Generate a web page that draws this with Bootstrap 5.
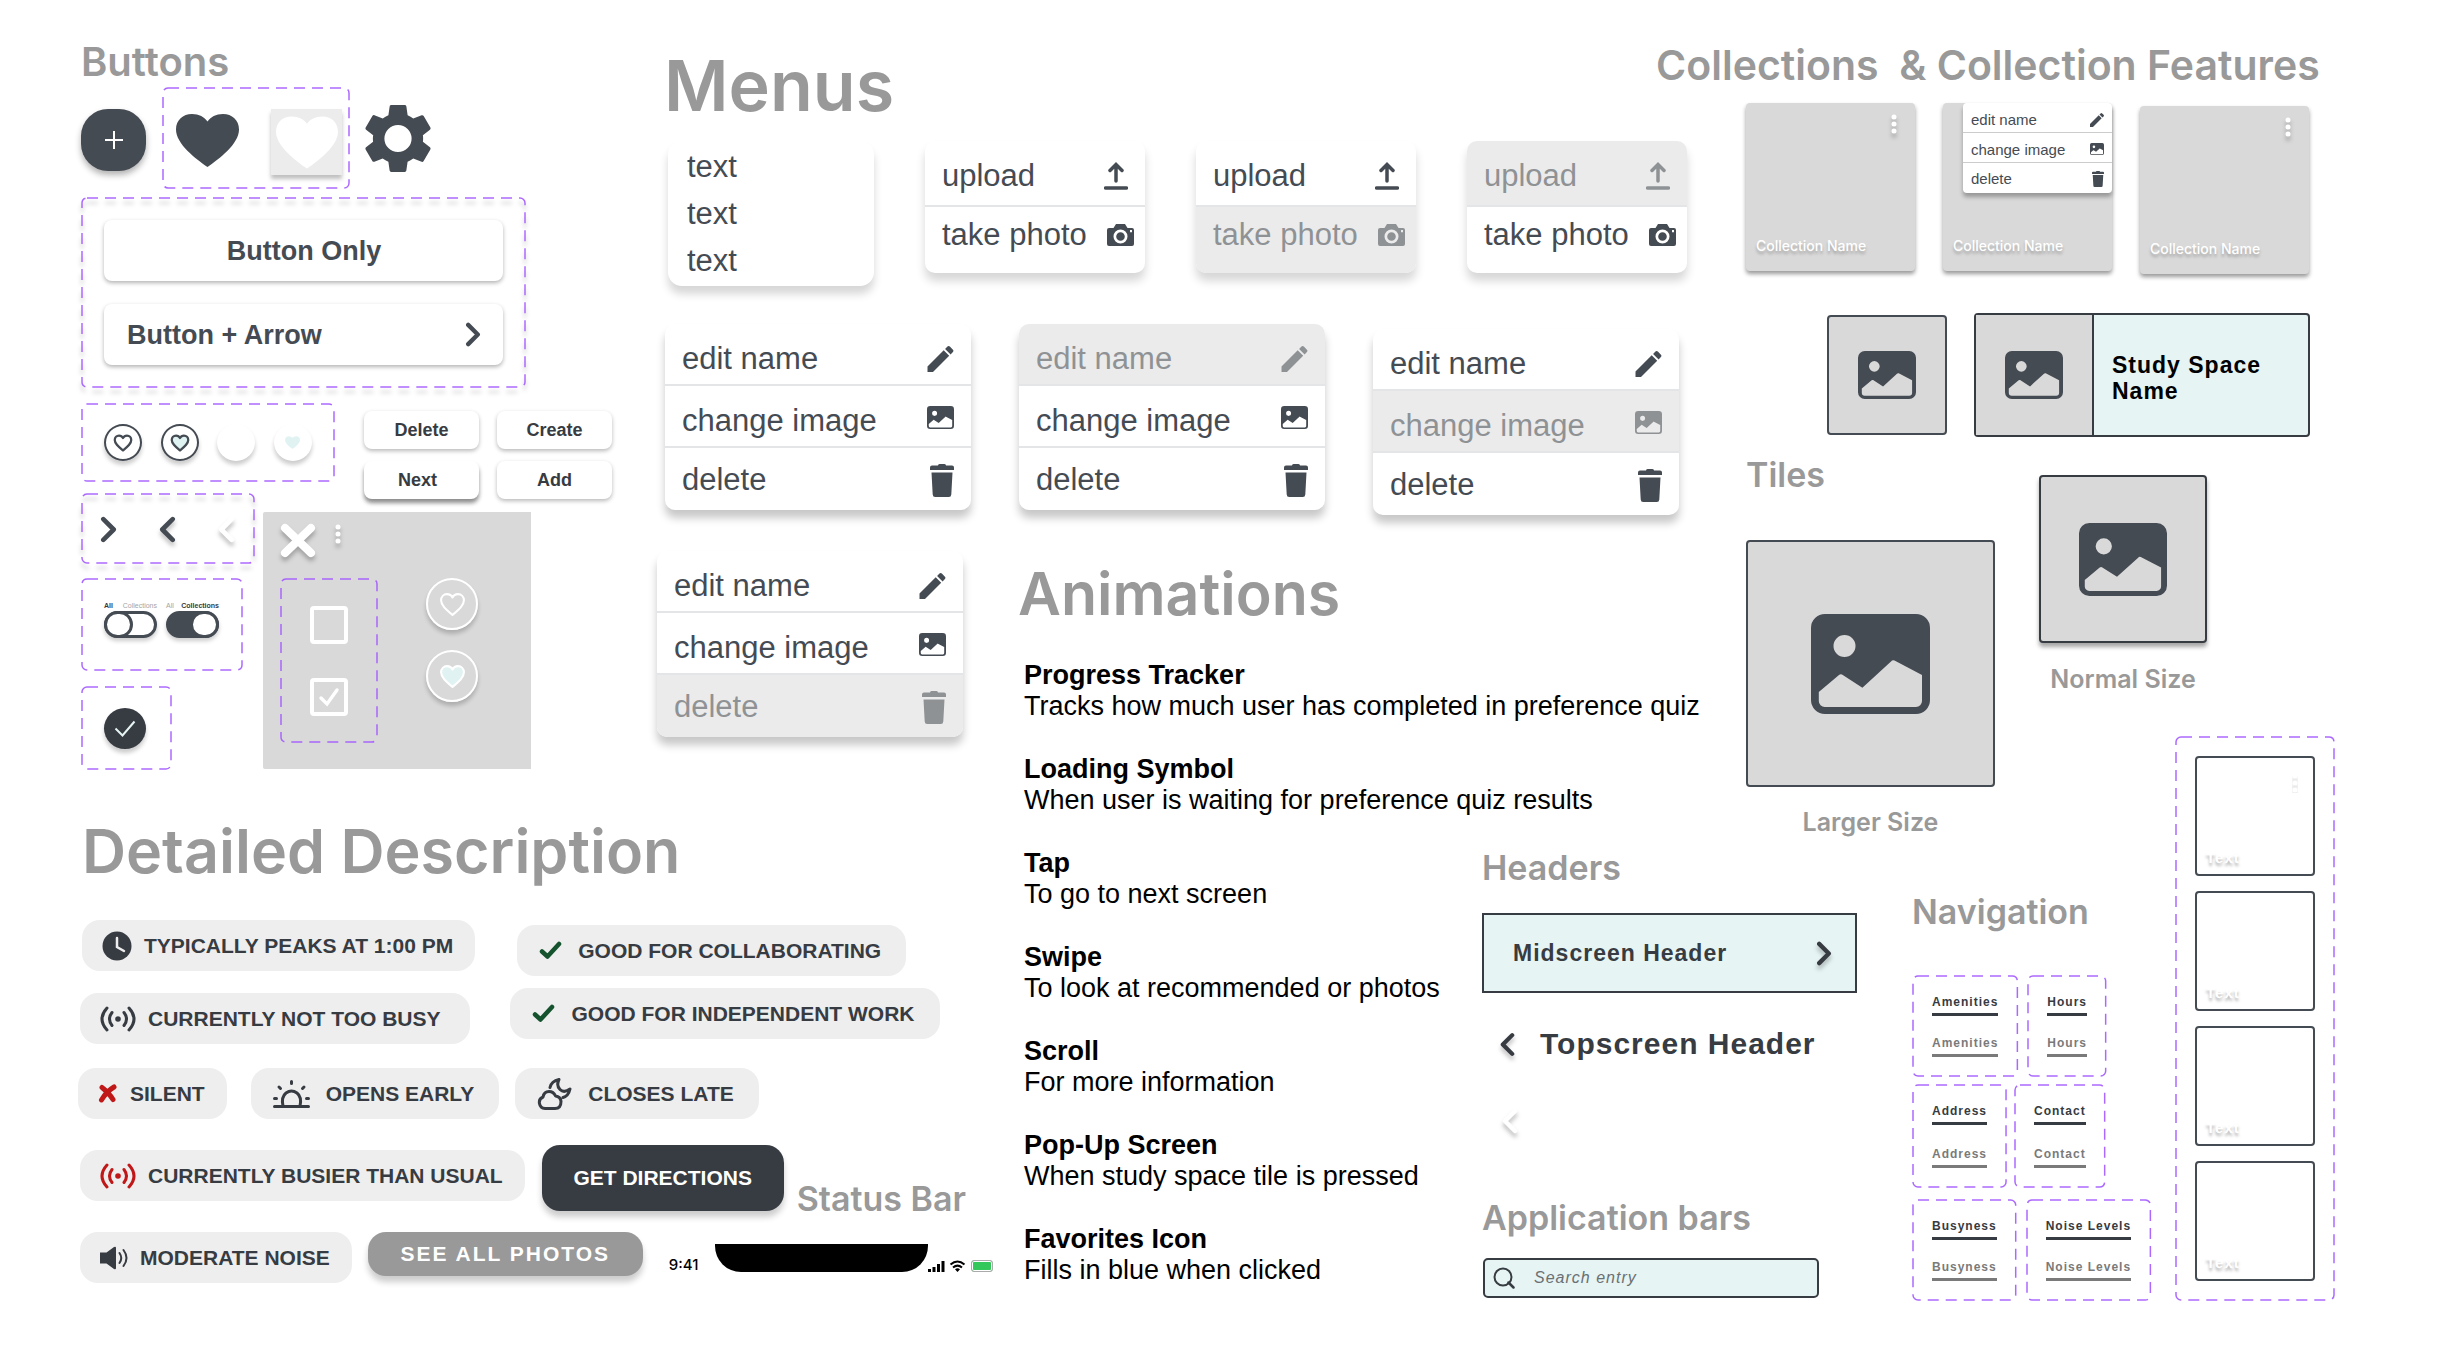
<!DOCTYPE html>
<html lang="en">
<head>
<meta charset="utf-8">
<meta name="viewport" content="width=device-width, initial-scale=1">
<title>Component sheet</title>
<link href="https://cdn.jsdelivr.net/npm/bootstrap@5.3.0/dist/css/bootstrap.min.css" rel="stylesheet">
<style>
:root{--ink:#454b53;--dark:#373b42;--soft:#eeeeee;--panel:#d9d9d9;--mint:#e6f4f4;--head:#999999;--dash:#a259ff}
body{font-family:"Liberation Sans",Arial,sans-serif;color:var(--ink);background:#fff}
h1,h2,h3,p{margin:0}
svg{display:block;flex:none}
button{border:0;background:none;padding:0;color:inherit;font-family:inherit}

/* board: overlapping grid areas */
.board{display:grid;padding:0 104px 48px 78px;
  grid-template-columns:minmax(0,577fr) minmax(0,363fr) minmax(0,464fr) minmax(0,174fr) minmax(0,88fr) minmax(0,168fr) minmax(0,263fr) minmax(0,161fr);
  grid-template-rows:minmax(454px,auto) minmax(104px,auto) minmax(178px,auto) minmax(79px,auto) minmax(32px,auto) auto}
.area-buttons{grid-area:1/1/5/2;padding:41px 0 0 3px}
.area-menus{grid-area:1/2/5/6;padding-top:44px}
.area-anim{grid-area:3/3/7/6}
.area-desc{grid-area:5/1/7/3}
.area-coll{grid-area:1/5/2/9;padding-top:41px}
.area-tiles{grid-area:2/6/6/9;gap:44px}
.area-strip{grid-area:4/8/7/9}
.area-heads{grid-area:6/4/7/7}
.area-nav{grid-area:6/7/7/8;padding-top:44px}

/* headings */
.ttl{font-family:Inter,sans-serif;font-weight:600;color:var(--head);font-size:34px;line-height:42px;white-space:nowrap}
.ttl-m{font-size:40px}
.ttl-l{font-size:41px;line-height:48px}
.ttl-xl{font-size:59px;line-height:72px}
.ttl-desc{font-size:61px}
.ttl-xxl{font-size:70px;line-height:84px;padding-left:9px}
.ttl-s{font-size:25px;line-height:30px;text-align:center}

/* dashed variant frame */
.frame{position:relative}
.frame>.dash{position:absolute;inset:0;width:100%;height:100%;pointer-events:none;overflow:visible}
.dash rect{x:1px;y:1px;width:calc(100% - 2px);height:calc(100% - 2px);rx:5px;fill:none;stroke:var(--dash);stroke-width:1.5;stroke-dasharray:11 7;opacity:.9}
.dash-sh{filter:drop-shadow(0 5px 2px rgba(0,0,0,.25))}
.sh{filter:drop-shadow(0 4px 2px rgba(0,0,0,.25))}

/* buttons */
.fab{width:65px;height:62px;margin-top:3px;border-radius:27px;background:var(--ink);box-shadow:0 4px 6px rgba(0,0,0,.3)}
.fr-hearts{width:188px;height:102px;margin:0 15px 0 16px;padding:0 8px 0 14px}
.heart-sq{width:71px;height:66px;background:#ececec;box-shadow:0 4px 4px rgba(0,0,0,.25)}
.fr-wide{width:445px;padding:23px;gap:23px}
.btn-wide{height:61px;border-radius:8px;background:#fff;box-shadow:0 2px 4px rgba(0,0,0,.3);font-weight:700;font-size:27px;line-height:30px;padding:0 22px 0 23px}
.ctl-row{margin-top:15px}
.lcol{width:174px}
.rcol{margin-left:8px}
.fr-circ{width:254px;height:79px;padding:0 23px}
.circ{width:38px;height:37px;border-radius:50%;background:#fff;box-shadow:0 4px 4px rgba(0,0,0,.2)}
.circ-line{border:2px solid var(--ink)}
.btn-grid{display:grid;grid-template-columns:115px 115px;gap:12px 18px;padding-top:8px;margin-left:101px}
.btn-sm2{height:38px;border-radius:8px;background:#fff;box-shadow:0 2px 4px rgba(0,0,0,.28);font-weight:700;font-size:18px;line-height:20px;color:var(--dark)}
.btn-next{box-shadow:0 4px 4px rgba(0,0,0,.45);padding-right:8px}
.fr-chev{height:71px;padding:2px 20px 0 19px;margin-top:11px}
.fr-tog{width:162px;height:93px;padding:24px 23px 0;margin-top:14px;gap:9px}
.tog{width:53px;font-size:7px;line-height:8px;color:#a5a5a5}
.tog b{color:var(--dark)}
.tog input{appearance:none;display:block;width:53px;height:27px;margin:1px 0 0;border:3px solid var(--ink);border-radius:14px;background:#fff;box-shadow:0 3px 4px rgba(0,0,0,.2)}
.tog input::before{content:"";display:block;width:29px;height:27px;margin:-3px;border:3px solid var(--ink);border-radius:14px;background:#fff}
.tog input:checked{background:var(--ink)}
.tog input:checked::before{margin-left:21px}
.fr-ok{width:91px;height:84px;margin-top:15px;padding:22px 0 0 23px}
.ok{width:42px;height:41px;border-radius:50%;background:var(--dark);box-shadow:0 4px 4px rgba(0,0,0,.2)}
.gpanel{width:268px;height:257px;margin-top:13px;background:var(--panel);border-radius:2px 0 0 2px;padding:11px 0 0 17px}
.gp-top{gap:19px}
.gp-main{gap:48px;margin-top:20px}
.gp-rings{gap:20px}
.fr-chk{width:98px;height:165px;padding-top:28px;gap:34px}
.chk{appearance:none;width:38px;height:38px;margin:0;border:4px solid #fff;border-radius:4px}
.chk:checked{background:no-repeat center/24px url("data:image/svg+xml,%3Csvg xmlns='http://www.w3.org/2000/svg' viewBox='0 0 24 24'%3E%3Cpath d='M4 13l6 6L20 5' fill='none' stroke='%23fff' stroke-width='3.4' stroke-linecap='round'/%3E%3C/svg%3E")}
.ring{width:52px;height:52px;border:2px solid #fff;border-radius:50%;box-shadow:0 4px 4px rgba(0,0,0,.2)}

/* menus */
.row-a{gap:51px;margin-top:13px;padding-left:13px}
.row-b{gap:48px;margin-top:38px;padding-left:10px}
.row-c{margin-top:36px;padding-left:2px}
.mnu{width:306px;border-radius:10px;background:#fff;box-shadow:0 8px 8px rgba(0,0,0,.22);overflow:hidden;font-size:31px;line-height:36px;flex:none}
.mnu-up{width:220px;box-shadow:0 8px 10px rgba(0,0,0,.16)}
.mnu-txt{width:206px;height:145px;border-radius:14px;padding:2px 19px;line-height:47px;box-shadow:0 8px 8px rgba(0,0,0,.16)}
.mi{display:flex;align-items:center;justify-content:space-between;width:100%;height:62px;padding:9px 17px 0;color:var(--ink);border-bottom:2px solid #e3e5e6;text-align:left}
.mi:last-child{border-bottom:0;padding-top:2px}
.mi .ic-img{margin-bottom:6px}
.mnu-up .mi{height:66px;padding:6px 11px 0 17px}
.mnu-up .mi:first-child{padding-right:17px}
.mnu-up .mi:last-child{padding-top:0;padding-bottom:10px}
.mi:disabled{background:#ebebeb;color:#8f9295}

/* animations */
.anim{font-size:27px;line-height:31px;color:#000;padding:30px 0 0 6px}
.anim dt{font-weight:700}
.anim dd{margin:0 0 32px}
.anim dd:last-child{margin:0}

/* description */
.pill{display:flex;align-items:center;height:51px;border-radius:18px;background:var(--soft);color:var(--dark);font-weight:700;font-size:21px;line-height:24px;padding:0 22px 0 20px;gap:12px;white-space:nowrap;flex:none}
.pill-w{padding:0 25px 0 22px;gap:16px}
.pill-x{padding-right:30px}
.mt5{margin-top:5px}
.prow-1{margin-top:33px;padding-left:4px;gap:42px}
.prow-2{margin-top:12px;padding-left:2px;gap:40px}
.prow-4{margin-top:26px;padding-left:2px;gap:17px}
.prow-5{margin-top:12px;padding-left:2px}
.btn-dir{height:66px;width:242px;border-radius:18px;background:var(--dark);color:#fff;font-weight:700;font-size:21px;box-shadow:0 6px 6px rgba(0,0,0,.2)}
.btn-all{height:44px;width:275px;border-radius:18px;background:var(--head);color:#fff;font-weight:700;font-size:21px;letter-spacing:2px;box-shadow:0 6px 6px rgba(0,0,0,.2)}
.ttl-bar{margin:33px 0 0 -4px}
.sbar{margin:12px 0 0 26px;height:28px;font-family:Inter,sans-serif;font-weight:500;font-size:15px;line-height:15px;color:#000}
.notch{width:213px;height:28px;margin-left:17px;background:#000;border-radius:0 0 26px 26px}
.batt{width:22px;height:12px;border:1px solid #aaa;border-radius:3px;background:#34c759;margin-left:5px;box-shadow:inset 0 0 0 1px #fff}

/* collections */
.cards-row{gap:28px;margin-top:14px;padding-left:90px}
.ccard{position:relative;width:169px;height:168px;border-radius:4px;background:var(--panel);box-shadow:0 3px 4px rgba(0,0,0,.4);padding:11px 18px 16px 10px;flex:none}
.ccard-low{margin-top:3px}
.cname{font-family:Inter,sans-serif;font-weight:500;font-size:14px;line-height:18px;color:#fff;text-shadow:0 3px 3px rgba(0,0,0,.25);white-space:nowrap}
.mnu-mini{position:absolute;top:0;right:0;width:149px;font-size:15px;line-height:18px;border-radius:4px;box-shadow:0 4px 4px rgba(0,0,0,.3)}
.mnu-mini .mi{height:30px;padding:5px 8px 0;border-width:1px;border-color:#ccc}
.mnu-mini .mi:last-child{padding-top:1px}
.mnu-mini .ic-img{margin-bottom:2px}
.study-row{gap:27px;margin-top:39px;padding-left:171px}
.pic{display:flex;align-items:center;justify-content:center;border:2px solid var(--ink);border-radius:4px;background:var(--panel);color:var(--ink);flex:none}
.pic-s{width:120px;height:120px}
.pic-m{width:168px;height:168px;border-color:var(--dark);box-shadow:0 4px 4px rgba(0,0,0,.35);margin-bottom:21px}
.pic-l{width:249px;height:247px;margin:44px 0 20px}
.tile-l{padding-left:2px}
.tile-m{padding-top:21px}
.study{width:336px;height:124px;border:2px solid var(--dark);border-radius:4px;background:var(--mint)}
.study-pic{width:118px;height:100%;background:var(--panel);border-right:2px solid var(--dark)}
.study p{padding:6px 0 0 18px}
.bold23{font-weight:700;font-size:23px;line-height:26px;letter-spacing:1px}

/* strip */
.fr-strip{padding:20px;gap:15px;width:160px}
.slot{height:120px;border:2px solid var(--ink);border-radius:4px;padding:15px 15px 7px 9px}
.slot span{font-weight:700;font-size:15px;line-height:18px;letter-spacing:1px;color:#fff;text-shadow:0 3px 3px rgba(0,0,0,.3)}

/* headers */
.midhead{width:375px;height:80px;border:2px solid var(--dark);background:var(--mint);color:var(--dark);padding:0 23px 0 29px;margin-top:24px}
.tophead{padding-left:18px;margin-top:33px;gap:25px;color:var(--dark);font-weight:700;font-size:30px;line-height:36px;letter-spacing:1px}
.back-light{margin:46px 0 0 20px}
.ttl-app{margin-top:56px}
.srch{width:336px;height:40px;margin:19px 0 0 1px;border:2px solid var(--dark);border-radius:5px;background:var(--mint);padding:0 8px;gap:19px}
.srch input{border:0;background:none;outline:0;padding:0;width:100%;font-style:italic;font-size:16px;letter-spacing:1px}
.srch input::placeholder{color:#6b7072;opacity:1}

/* navigation */
.nav-a{gap:9px;margin-top:42px}
.nav-b{gap:7px;margin-top:7px}
.nav-c{gap:9px;margin-top:11px}
.nset{padding:20px;display:flex;flex-direction:column;gap:20px}
.nset-t{gap:22px}
.nset a{font-weight:700;font-size:12px;line-height:14px;letter-spacing:1px;color:var(--dark);text-decoration:none;border-bottom:3px solid var(--dark);padding-bottom:4px;white-space:nowrap}
.nset a.off{color:#7a7a7a;border-color:#7a7a7a}
</style>
<script src="https://cdn.jsdelivr.net/npm/bootstrap@5.3.0/dist/js/bootstrap.bundle.min.js"></script>
</head>
<body>
<svg width="0" height="0" class="position-absolute" aria-hidden="true">
  <symbol id="heart" viewBox="0 0 63 53"><path d="M31.500 53C20 45 0 30 0 15.500 0 6 7 0 16 0c7 0 12.500 3 15.500 7.500C34.500 3 40 0 47 0c9 0 16 6 16 15.500C63 30 43 45 31.500 53z" fill="currentColor"/></symbol>
  <symbol id="heart-o" viewBox="0 0 26 24"><path d="M13 22C7 17 2 13 2 8c0-3.500 2.500-6 5.700-6C10 2 12 3.200 13 5.300 14 3.200 16 2 18.300 2 21.500 2 24 4.500 24 8c0 5-5 9-11 14z" stroke="currentColor" stroke-linejoin="round"/></symbol>
  <symbol id="gear" viewBox="2.600 2.400 18.800 19.200"><path fill-rule="evenodd" fill="currentColor" d="M19.140 12.940c.04-.3.06-.61.06-.94 0-.32-.02-.64-.07-.94l2.030-1.580c.18-.14.23-.41.12-.61l-1.920-3.320c-.12-.22-.37-.29-.59-.22l-2.390.96c-.5-.38-1.030-.7-1.620-.94l-.36-2.540c-.04-.24-.24-.41-.48-.41h-3.840c-.24 0-.43.17-.47.41l-.36 2.540c-.59.24-1.130.57-1.620.94l-2.390-.96c-.22-.08-.47 0-.59.22L2.740 8.870c-.12.21-.08.47.12.61l2.030 1.580c-.05.3-.09.63-.09.94s.02.64.07.94l-2.030 1.580c-.18.14-.23.41-.12.61l1.920 3.320c.12.22.37.29.59.22l2.390-.96c.5.38 1.030.7 1.620.94l.36 2.540c.05.24.24.41.48.41h3.840c.24 0 .44-.17.47-.41l.36-2.540c.59-.24 1.130-.56 1.620-.94l2.390.96c.22.08.47 0 .59-.22l1.920-3.320c.12-.22.07-.47-.12-.61zM12 15.900a3.900 3.900 0 1 1 0-7.800 3.900 3.900 0 0 1 0 7.800z"/></symbol>
  <symbol id="right" viewBox="0 0 16 26"><path d="M3 3l10 10L3 23" fill="none" stroke="currentColor" stroke-width="4.500" stroke-linecap="round" stroke-linejoin="round"/></symbol>
  <symbol id="left" viewBox="0 0 16 26"><path d="M13 3L3 13l10 10" fill="none" stroke="currentColor" stroke-width="4.500" stroke-linecap="round" stroke-linejoin="round"/></symbol>
  <symbol id="upload" viewBox="0 0 24 28"><path d="M12 19V3M6 8.500L12 2.500l6 6M1.500 26h21" fill="none" stroke="currentColor" stroke-width="3.500" stroke-linecap="round"/></symbol>
  <symbol id="camera" viewBox="0 0 27 22"><path fill-rule="evenodd" fill="currentColor" d="M9 0h9l2.500 4H25a2 2 0 0 1 2 2v14a2 2 0 0 1-2 2H2a2 2 0 0 1-2-2V6a2 2 0 0 1 2-2h4.500zM13.500 5.500a7 7 0 1 0 0 14 7 7 0 0 0 0-14zM23 6v2.200h2V6zM13.500 8.200a4.300 4.300 0 1 1 0 8.600 4.300 4.300 0 0 1 0-8.600z"/></symbol>
  <symbol id="pencil" viewBox="0 0 26 26"><path fill="currentColor" d="M0 26v-5.500L16.200 4.300l5.500 5.500L5.500 26zM17.600 2.900L19.700.8a2 2 0 0 1 2.900 0l2.600 2.600a2 2 0 0 1 0 2.900L23.100 8.400z"/></symbol>
  <symbol id="image" viewBox="0 0 119 100" preserveAspectRatio="none"><path fill-rule="evenodd" fill="currentColor" d="M14 0h91a14 14 0 0 1 14 14v72a14 14 0 0 1-14 14H14A14 14 0 0 1 0 86V14A14 14 0 0 1 14 0zM33.500 21a11 11 0 1 0 0 22 11 11 0 0 0 0-22zM7.800 78v9a6 6 0 0 0 6 6H105a6 6 0 0 0 6-6V61L83.500 46.500q-2-1-3.500 1L51.400 73.700 31 60.500q-1.600-.8-3 .5z"/></symbol>
  <symbol id="trash" viewBox="0 0 24 33" preserveAspectRatio="none"><path fill="currentColor" d="M8 1.500Q8 0 9.500 0h5Q16 0 16 1.500h6Q24 1.500 24 3.500V6H0V3.500Q0 1.500 2 1.500zM1.500 8.500h21l-1.200 22Q21.200 33 18.800 33H5.200Q2.800 33 2.700 30.500z"/></symbol>
  <symbol id="dots" viewBox="0 0 6 20"><circle cx="3" cy="3" r="2.500" fill="#fff"/><circle cx="3" cy="10" r="2.500" fill="#fff"/><circle cx="3" cy="17" r="2.500" fill="#fff"/></symbol>
  <symbol id="tick" viewBox="0 0 23 19"><path d="M3 10.500l5.500 5L20 3" fill="none" stroke="#14532d" stroke-width="4.500" stroke-linecap="round" stroke-linejoin="round"/></symbol>
  <symbol id="waves" viewBox="0 0 36 26"><g fill="none" stroke="currentColor" stroke-width="3" stroke-linecap="round"><path d="M7 2Q-3 13 7 24M29 2q10 11 0 22M12 6.500q-5 6.500 0 13M24 6.500q5 6.500 0 13"/></g><circle cx="18" cy="13" r="2.800" fill="currentColor"/></symbol>
</svg>

<main class="board">

<section class="area-buttons">
  <h2 class="ttl ttl-m">Buttons</h2>
  <div class="d-flex align-items-center mt-1">
    <button class="fab d-flex align-items-center justify-content-center" aria-label="Add"><svg width="18" height="18"><path d="M9 0v18M0 9h18" stroke="#fff" stroke-width="2"/></svg></button>
    <div class="frame fr-hearts d-flex align-items-center justify-content-between"><svg class="dash"><rect/></svg>
      <button class="mt-1" aria-label="Favorite"><svg width="63" height="53"><use href="#heart"/></svg></button>
      <button class="heart-sq mt-2 d-flex align-items-center justify-content-center text-white" aria-label="Favorite, light"><svg width="62" height="53"><use href="#heart"/></svg></button>
    </div>
    <button aria-label="Settings"><svg width="66" height="67"><use href="#gear"/></svg></button>
  </div>
  <div class="frame fr-wide d-flex flex-column mt-2"><svg class="dash dash-sh"><rect/></svg>
    <button class="btn-wide">Button Only</button>
    <button class="btn-wide d-flex align-items-center justify-content-between">Button + Arrow <svg width="16" height="25"><use href="#right"/></svg></button>
  </div>
  <div class="ctl-row d-flex">
    <div class="lcol">
      <div class="frame fr-circ d-flex align-items-center justify-content-between"><svg class="dash"><rect/></svg>
        <button class="circ circ-line d-flex align-items-center justify-content-center" aria-label="Heart outline"><svg width="20" height="18" fill="none" stroke-width="3"><use href="#heart-o"/></svg></button>
        <button class="circ circ-line d-flex align-items-center justify-content-center" aria-label="Heart filled"><svg width="20" height="18" fill="#dff3f2" stroke-width="3"><use href="#heart-o"/></svg></button>
        <button class="circ" aria-label="White heart"></button>
        <button class="circ d-flex align-items-center justify-content-center" aria-label="Mint heart"><svg width="15" height="13" color="#e0f3f2"><use href="#heart"/></svg></button>
      </div>
      <div class="frame fr-chev d-flex align-items-center justify-content-between"><svg class="dash dash-sh"><rect/></svg>
        <button aria-label="Next"><svg width="17" height="27"><use href="#right"/></svg></button>
        <button aria-label="Back"><svg class="sh" width="17" height="27"><use href="#left"/></svg></button>
        <button class="text-white" aria-label="Back, light"><svg class="sh" width="17" height="27"><use href="#left"/></svg></button>
      </div>
      <div class="frame fr-tog d-flex"><svg class="dash"><rect/></svg>
        <label class="tog"><span class="d-flex justify-content-between"><b>All</b><span>Collections</span></span><input type="checkbox"></label>
        <label class="tog"><span class="d-flex justify-content-between"><span>All</span><b>Collections</b></span><input type="checkbox" checked></label>
      </div>
      <div class="frame fr-ok"><svg class="dash"><rect/></svg>
        <button class="ok d-flex align-items-center justify-content-center" aria-label="Done"><svg width="22" height="17"><path d="M1.500 8.500l7 7L20.500 1.500" fill="none" stroke="#e6f4f4" stroke-width="2"/></svg></button>
      </div>
    </div>
    <div class="rcol d-flex flex-column align-items-start">
      <div class="btn-grid">
        <button class="btn-sm2">Delete</button><button class="btn-sm2">Create</button>
        <button class="btn-sm2 btn-next">Next</button><button class="btn-sm2">Add</button>
      </div>
      <div class="gpanel">
        <div class="gp-top d-flex">
          <button aria-label="Close"><svg class="sh" width="36" height="35" viewBox="0 0 36 35"><path d="M5 5l26 25M31 5L5 30" stroke="#fff" stroke-width="8" stroke-linecap="round"/></svg></button>
          <button class="align-self-start" aria-label="More"><svg class="sh" width="6" height="22"><use href="#dots"/></svg></button>
        </div>
        <div class="gp-main d-flex">
          <div class="frame fr-chk d-flex flex-column align-items-center"><svg class="dash"><rect/></svg>
            <input class="chk" type="checkbox" aria-label="Unselected"><input class="chk" type="checkbox" checked aria-label="Selected">
          </div>
          <div class="gp-rings d-flex flex-column">
            <button class="ring d-flex align-items-center justify-content-center text-white" aria-label="Heart"><svg width="27" height="25" fill="none" stroke-width="2"><use href="#heart-o"/></svg></button>
            <button class="ring d-flex align-items-center justify-content-center text-white" aria-label="Heart on"><svg width="27" height="25" fill="#e0f3f2" stroke-width="2"><use href="#heart-o"/></svg></button>
          </div>
        </div>
      </div>
    </div>
  </div>
</section>

<section class="area-menus">
  <h2 class="ttl ttl-xxl">Menus</h2>
  <div class="row-a d-flex align-items-start">
    <div class="mnu mnu-txt"><p>text</p><p>text</p><p>text</p></div>
    <div class="mnu mnu-up"><button class="mi">upload<svg width="24" height="28"><use href="#upload"/></svg></button><button class="mi">take photo<svg width="27" height="22"><use href="#camera"/></svg></button></div>
    <div class="mnu mnu-up"><button class="mi">upload<svg width="24" height="28"><use href="#upload"/></svg></button><button class="mi" disabled>take photo<svg width="27" height="22"><use href="#camera"/></svg></button></div>
    <div class="mnu mnu-up"><button class="mi" disabled>upload<svg width="24" height="28"><use href="#upload"/></svg></button><button class="mi">take photo<svg width="27" height="22"><use href="#camera"/></svg></button></div>
  </div>
  <div class="row-b d-flex align-items-start">
    <div class="mnu"><button class="mi">edit name<svg width="27" height="26"><use href="#pencil"/></svg></button><button class="mi">change image<svg class="ic-img" width="27" height="23"><use href="#image"/></svg></button><button class="mi">delete<svg width="24" height="33"><use href="#trash"/></svg></button></div>
    <div class="mnu"><button class="mi" disabled>edit name<svg width="27" height="26"><use href="#pencil"/></svg></button><button class="mi">change image<svg class="ic-img" width="27" height="23"><use href="#image"/></svg></button><button class="mi">delete<svg width="24" height="33"><use href="#trash"/></svg></button></div>
    <div class="mnu mt5"><button class="mi">edit name<svg width="27" height="26"><use href="#pencil"/></svg></button><button class="mi" disabled>change image<svg class="ic-img" width="27" height="23"><use href="#image"/></svg></button><button class="mi">delete<svg width="24" height="33"><use href="#trash"/></svg></button></div>
  </div>
  <div class="row-c d-flex">
    <div class="mnu"><button class="mi">edit name<svg width="27" height="26"><use href="#pencil"/></svg></button><button class="mi">change image<svg class="ic-img" width="27" height="23"><use href="#image"/></svg></button><button class="mi" disabled>delete<svg width="24" height="33"><use href="#trash"/></svg></button></div>
  </div>
</section>

<section class="area-anim">
  <h2 class="ttl ttl-xl">Animations</h2>
  <dl class="anim mb-0">
    <dt>Progress Tracker</dt><dd>Tracks how much user has completed in preference quiz</dd>
    <dt>Loading Symbol</dt><dd>When user is waiting for preference quiz results</dd>
    <dt>Tap</dt><dd>To go to next screen</dd>
    <dt>Swipe</dt><dd>To look at recommended or photos</dd>
    <dt>Scroll</dt><dd>For more information</dd>
    <dt>Pop-Up Screen</dt><dd>When study space tile is pressed</dd>
    <dt>Favorites Icon</dt><dd>Fills in blue when clicked</dd>
  </dl>
</section>

<section class="area-desc">
  <h2 class="ttl ttl-xl ttl-desc ps-1">Detailed Description</h2>
  <div class="prow-1 d-flex align-items-start">
    <div class="pill"><svg width="30" height="30" viewBox="0 0 30 30"><circle cx="15" cy="15" r="14.500" fill="#373b42"/><path d="M15 7v9l7 4" fill="none" stroke="#eee" stroke-width="2.500" stroke-linecap="round"/></svg>TYPICALLY PEAKS AT 1:00 PM</div>
    <div class="pill pill-w mt5"><svg width="23" height="19"><use href="#tick"/></svg>GOOD FOR COLLABORATING</div>
  </div>
  <div class="prow-2 d-flex align-items-start">
    <div class="pill pill-x mt5"><svg width="36" height="26"><use href="#waves"/></svg>CURRENTLY NOT TOO BUSY</div>
    <div class="pill pill-w"><svg width="23" height="19"><use href="#tick"/></svg>GOOD FOR INDEPENDENT WORK</div>
  </div>
  <div class="d-flex align-items-start mt-4">
    <div class="pill"><svg width="20" height="19" viewBox="0 0 20 19"><path d="M4 3.500c4 3 8 7 11 12M16 3C11 6 7 10 3.500 16" fill="none" stroke="#c01818" stroke-width="5" stroke-linecap="round"/></svg>SILENT</div>
    <div class="pill pill-w ms-4"><svg width="37" height="28" viewBox="0 0 37 28"><g fill="none" stroke="#373b42" stroke-width="3" stroke-linecap="round"><path d="M1.500 26.500h34M10 26Q8 17 13 13q5.500-4 11 0 5 4 3 13M1.500 18.500h2M33.500 18.500h2M6 7l1.500 1.500M31 7l-1.500 1.500M18.500 1.500v2"/></g></svg>OPENS EARLY</div>
    <div class="pill pill-w ms-3"><svg width="35" height="32" viewBox="0 0 35 32"><g fill="none" stroke="#373b42" stroke-width="3" stroke-linejoin="round" stroke-linecap="round"><path d="M8 30.500a6 6 0 0 1-2-11.500q1-5.500 6-5.500 4.500 0 6.500 4.500 5 .5 5.500 5.500 0 7-6 7zM13 9.500q1.500-6.500 9-8-3 6 1 10t10-.5q-1.500 7-7 8.500"/></g></svg>CLOSES LATE</div>
  </div>
  <div class="prow-4 d-flex align-items-start">
    <div class="pill mt5"><svg width="36" height="26" color="#c01818"><use href="#waves"/></svg>CURRENTLY BUSIER THAN USUAL</div>
    <button class="btn-dir">GET DIRECTIONS</button>
    <h2 class="ttl ttl-bar">Status Bar</h2>
  </div>
  <div class="prow-5 d-flex align-items-start">
    <div class="pill"><svg width="28" height="24" viewBox="0 0 28 24"><path d="M0 6.500h6.500L14 1q2-1 2 1v20q0 2-2 1l-7.500-5.500H0z" fill="#373b42"/><path d="M19.500 7q3.500 5 0 10M23.500 4q6 8 0 16" fill="none" stroke="#373b42" stroke-width="2" stroke-linecap="round"/></svg>MODERATE NOISE</div>
    <button class="btn-all ms-3">SEE ALL PHOTOS</button>
    <div class="sbar d-flex align-items-end">
      <span>9:41</span><div class="notch"></div>
      <svg width="17" height="12"><path d="M1.500 12V9M6 12V7M10.500 12V4M15 12V1" stroke="#000" stroke-width="3"/></svg>
      <svg class="ms-1" width="17" height="12" viewBox="0 0 17 12"><path d="M1.500 4.500q7-6 14 0M4 7.500q4.500-3.700 9 0" fill="none" stroke="#000" stroke-width="2"/><path d="M8.500 12L6 9.300q2.500-2 5 0z"/></svg>
      <div class="batt"></div>
    </div>
  </div>
</section>

<section class="area-coll">
  <h2 class="ttl ttl-l">Collections &nbsp;&amp; Collection Features</h2>
  <div class="cards-row d-flex align-items-start">
    <div class="ccard d-flex flex-column justify-content-between"><svg class="sh align-self-end" width="6" height="20"><use href="#dots"/></svg><span class="cname">Collection Name</span></div>
    <div class="ccard d-flex flex-column justify-content-end">
      <div class="mnu mnu-mini"><button class="mi">edit name<svg width="14" height="14"><use href="#pencil"/></svg></button><button class="mi">change image<svg class="ic-img" width="14" height="12"><use href="#image"/></svg></button><button class="mi">delete<svg width="12" height="16"><use href="#trash"/></svg></button></div>
      <span class="cname">Collection Name</span>
    </div>
    <div class="ccard ccard-low d-flex flex-column justify-content-between"><svg class="sh align-self-end" width="6" height="20"><use href="#dots"/></svg><span class="cname">Collection Name</span></div>
  </div>
  <div class="study-row d-flex align-items-center">
    <div class="pic pic-s"><svg width="58" height="48"><use href="#image"/></svg></div>
    <div class="study d-flex align-items-center">
      <div class="study-pic d-flex align-items-center justify-content-center"><svg width="58" height="48"><use href="#image"/></svg></div>
      <p class="bold23 text-black">Study Space<br>Name</p>
    </div>
  </div>
</section>

<section class="area-tiles d-flex align-items-start">
  <div class="tile-l">
    <h2 class="ttl">Tiles</h2>
    <div class="pic pic-l"><svg width="119" height="100"><use href="#image"/></svg></div>
    <h3 class="ttl ttl-s">Larger Size</h3>
  </div>
  <div class="tile-m">
    <div class="pic pic-m"><svg width="88" height="73"><use href="#image"/></svg></div>
    <h3 class="ttl ttl-s">Normal Size</h3>
  </div>
</section>

<section class="area-strip">
  <div class="frame fr-strip d-flex flex-column"><svg class="dash"><rect/></svg>
    <div class="slot d-flex flex-column justify-content-between"><svg class="align-self-end opacity-75" width="6" height="20"><use href="#dots" class="sh"/></svg><span>Text</span></div>
    <div class="slot d-flex align-items-end"><span>Text</span></div>
    <div class="slot d-flex align-items-end"><span>Text</span></div>
    <div class="slot d-flex align-items-end"><span>Text</span></div>
  </div>
</section>

<section class="area-heads">
  <h2 class="ttl">Headers</h2>
  <button class="midhead bold23 d-flex align-items-center justify-content-between">Midscreen Header<svg class="sh" width="16" height="25"><use href="#right"/></svg></button>
  <div class="tophead d-flex align-items-center"><button aria-label="Back"><svg class="sh" width="15" height="25"><use href="#left"/></svg></button>Topscreen Header</div>
  <button class="back-light text-white" aria-label="Back, light"><svg class="sh" width="16" height="26"><use href="#left"/></svg></button>
  <h2 class="ttl ttl-app">Application bars</h2>
  <label class="srch d-flex align-items-center"><svg width="22" height="22" viewBox="0 0 22 22"><circle cx="10" cy="10" r="8.500" fill="none" stroke="#373b42" stroke-width="2"/><path d="M15.500 15.500l5 5" stroke="#373b42" stroke-width="2.500" stroke-linecap="round"/></svg><input type="search" placeholder="Search entry" aria-label="Search"></label>
</section>

<nav class="area-nav">
  <h2 class="ttl">Navigation</h2>
  <div class="nav-a d-flex">
    <div class="frame nset"><svg class="dash"><rect/></svg><a href="#">Amenities</a><a href="#" class="off">Amenities</a></div>
    <div class="frame nset"><svg class="dash"><rect/></svg><a href="#">Hours</a><a href="#" class="off">Hours</a></div>
  </div>
  <div class="nav-b d-flex">
    <div class="frame nset nset-t"><svg class="dash"><rect/></svg><a href="#">Address</a><a href="#" class="off">Address</a></div>
    <div class="frame nset nset-t"><svg class="dash"><rect/></svg><a href="#">Contact</a><a href="#" class="off">Contact</a></div>
  </div>
  <div class="nav-c d-flex">
    <div class="frame nset"><svg class="dash"><rect/></svg><a href="#">Busyness</a><a href="#" class="off">Busyness</a></div>
    <div class="frame nset"><svg class="dash"><rect/></svg><a href="#">Noise Levels</a><a href="#" class="off">Noise Levels</a></div>
  </div>
</nav>

</main>
</body>
</html>
